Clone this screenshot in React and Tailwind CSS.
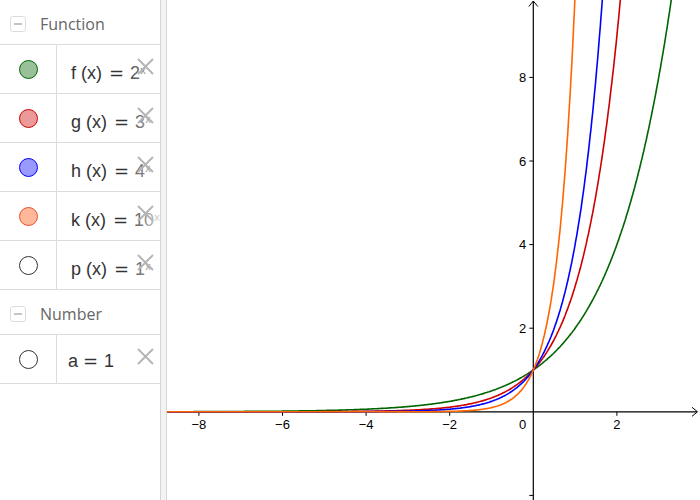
import React from "react";

const S = 41.8;
const OX = 366.3;
const OY = 411.8;

const curves = [
	{ base: 2, color: "#006400" },
	{ base: 3, color: "#cc0000" },
	{ base: 4, color: "#0000ff" },
	{ base: 10, color: "#ff6600" },
];

function curvePath(b) {
	const pts = [];
	for (let x = -9; x <= 5; x += 0.02) {
		const px = OX + S * x;
		const py = OY - S * Math.pow(b, x);
		pts.push(`${px.toFixed(1)},${py.toFixed(1)}`);
		if (py < -5) break;
	}
	return "M" + pts.join("L");
}

const functions = [
	{ name: "f", base: "2", fill: "#99c199", stroke: "#006400" },
	{ name: "g", base: "3", fill: "#eb9999", stroke: "#cc0000" },
	{ name: "h", base: "4", fill: "#9999ff", stroke: "#0000ff" },
	{ name: "k", base: "10", fill: "#ffb899", stroke: "#e8502a" },
	{ name: "p", base: "1", fill: "#ffffff", stroke: "#333333" },
];

const eqFont = { fontFamily: '"DejaVu Sans", sans-serif' };

function GroupHeader({ title }) {
	return (
		<div className="flex h-[45px] items-center border-b border-[#dcdcdc] pt-[3px]">
			<div className="ml-[10px] flex h-[16px] w-[16px] items-center justify-center rounded-[3px] border border-[#dddddd]">
				<span className="block h-[2px] w-[8px] bg-[#c4c4c4]" />
			</div>
			<span className="ml-[14px] text-[16px] text-[#666666]">{title}</span>
		</div>
	);
}

function DeleteIcon() {
	return (
		<svg className="absolute right-[6px] top-[13px]" width="17" height="17" viewBox="0 0 17 17">
			<path d="M1 1L16 16M16 1L1 16" stroke="#b4b4b4" strokeWidth="1.8" />
		</svg>
	);
}

function Row({ fill, stroke, children, pad }) {
	return (
		<div className="flex h-[49px] border-b border-[#dcdcdc]">
			<div className="flex w-[57px] shrink-0 items-center justify-center border-r border-[#dcdcdc]">
				<span
					className="block h-[19px] w-[19px] rounded-full border"
					style={{ backgroundColor: fill, borderColor: stroke }}
				/>
			</div>
			<div className="relative flex flex-1 items-center overflow-hidden">
				<div className={`flex items-baseline whitespace-nowrap text-[18px] text-[#333333] ${pad}`} style={{ fontFamily: '"Liberation Sans", Arial, sans-serif' }}>
					{children}
				</div>
				<div className="absolute right-0 top-0 h-full w-[34px] bg-linear-to-r from-white/0 via-white/40 to-white/80" />
				<DeleteIcon />
			</div>
		</div>
	);
}

export default function App() {
	return (
		<div className="flex h-[500px] w-[700px] overflow-hidden bg-white" style={{ fontFamily: '"Open Sans", sans-serif' }}>
			<aside className="w-[160px] shrink-0">
				<GroupHeader title="Function" />
				{functions.map((f) => (
					<Row key={f.name} fill={f.fill} stroke={f.stroke} pad="pl-[14px] pt-[8px]">
						<span>{f.name}</span>
						<span className="ml-[5px]">(x)</span>
						<span className="ml-[7px]" style={eqFont}>=</span>
						<span className="ml-[6px]">{f.base}</span>
						<sup className="text-[11px]">x</sup>
					</Row>
				))}
				<GroupHeader title="Number" />
				<Row fill="#ffffff" stroke="#333333" pad="pl-[11px] pt-[4px]">
					<span>a</span>
					<span className="ml-[5px]" style={eqFont}>=</span>
					<span className="ml-[6px]">1</span>
				</Row>
			</aside>

			<div className="w-[7px] shrink-0 border-x border-[#d6d6d6] bg-[#f3f3f3]" />

			<svg width="533" height="500" viewBox="0 0 533 500" className="shrink-0" style={{ fontFamily: '"Liberation Sans", Arial, sans-serif' }}>
				<path d={`M0 ${OY}H530`} stroke="#000" strokeWidth="1.2" />
				<path d={`M525 ${OY - 4.5}L530.5 ${OY}L525 ${OY + 4.5}`} stroke="#000" strokeWidth="1" fill="none" />
				<path d={`M${OX} 1V500`} stroke="#000" strokeWidth="1.2" />
				<path d={`M${OX - 4.5} 6.5L${OX} 1L${OX + 4.5} 6.5`} stroke="#000" strokeWidth="1" fill="none" />

				{[-8, -6, -4, -2, 2].map((v) => (
					<g key={"x" + v}>
						<path d={`M${OX + S * v} ${OY}v4`} stroke="#000" strokeWidth="1" />
						<text x={OX + S * v} y={OY + 17} fontSize="13" textAnchor="middle" fill="#000">
							{v < 0 ? "\u2212" + -v : v}
						</text>
					</g>
				))}
				{[-2, 2, 4, 6, 8].map((v) => (
					<g key={"y" + v}>
						<path d={`M${OX - 4} ${OY - S * v}h4`} stroke="#000" strokeWidth="1" />
						{v > 0 && (
							<text x={OX - 7} y={OY - S * v + 4.5} fontSize="13" textAnchor="end" fill="#000">
								{v}
							</text>
						)}
					</g>
				))}
				<text x={OX - 7} y={OY + 17} fontSize="13" textAnchor="end" fill="#000">
					0
				</text>

				{curves.map((c) => (
					<path key={c.base} d={curvePath(c.base)} stroke={c.color} strokeWidth="1.6" fill="none" />
				))}
			</svg>
		</div>
	);
}
